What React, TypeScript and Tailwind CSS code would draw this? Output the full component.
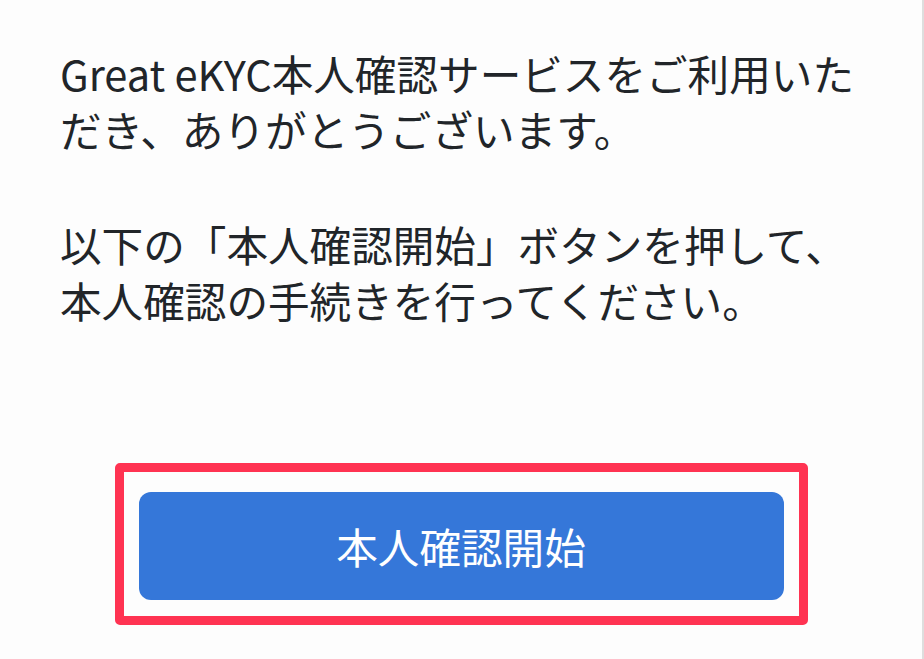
import React from "react";

export default function App() {
  return (
    <div className="flex h-[659px] w-[924px] overflow-hidden bg-[#fdfdfd]">
      <div
        className="flex flex-1 flex-col px-[60px] pt-[45px] text-[#212529]"
        style={{ fontFamily: '"Noto Sans CJK JP", "Noto Sans", sans-serif' }}
      >
        <p className="text-[41.6px] leading-[56px]">
          Great eKYC本人確認サービスをご利用いただき、ありがとうございます。
        </p>
        <p className="mt-[59px] text-[41.6px] leading-[56px]">
          以下の「本人確認開始」ボタンを押して、
          <br />
          本人確認の手続きを行ってください。
        </p>
        <div className="mt-[135px] flex justify-center">
          <div className="rounded-[5px] border-[9px] border-[#ff3352] px-[15px] pb-[16px] pt-[20px]">
            <button className="flex h-[108px] w-[645px] items-center justify-center rounded-[12px] bg-[#3577d9] text-[41.6px] text-white">
              本人確認開始
            </button>
          </div>
        </div>
      </div>
      <div className="w-[2px] bg-[#dedede]" />
    </div>
  );
}
